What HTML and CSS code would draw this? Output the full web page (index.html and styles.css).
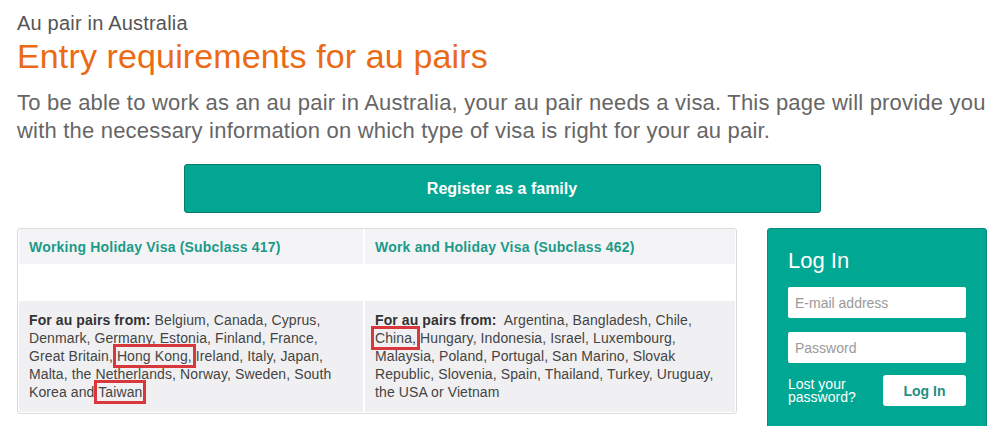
FILE: index.html
```html
<!DOCTYPE html>
<html lang="en">
<head>
    <meta charset="UTF-8">
    <meta name="viewport" content="width=device-width, initial-scale=1.0">
    <title>Entry requirements for au pairs</title>
    <link rel="stylesheet" href="styles.css">
</head>
<body>

    <div class="page">
        <div class="kicker">Au pair in Australia</div>
        <h1>Entry requirements for au pairs</h1>
        <p class="intro">To be able to work as an au pair in Australia, your au pair needs a visa. This page will provide you with the necessary information on which type of visa is right for your au pair.</p>

        <div class="cta">
            <a class="btn-register" href="#">Register as a family</a>
        </div>

        <div class="row">
            <div class="visas">
                <div class="visa-head">Working Holiday Visa (Subclass 417)</div>
                <div class="visa-head">Work and Holiday Visa (Subclass 462)</div>
                <div class="visa-gap"></div>
                <div class="visa-gap"></div>
                <div class="visa-body first">
                    <b>For au pairs from:</b> Belgium, Canada, Cyprus, Denmark, Germany, Estonia, Finland, France, Great Britain, <span class="mark">Hong Kong,</span> Ireland, Italy, Japan, Malta, the Netherlands, Norway, Sweden, South Korea and <span class="mark">Taiwan</span>
                </div>
                <div class="visa-body">
                    <b>For au pairs from:</b>&nbsp; Argentina, Bangladesh, Chile, <span class="mark">China,</span> Hungary, Indonesia, Israel, Luxembourg, Malaysia, Poland, Portugal, San Marino, Slovak Republic, Slovenia, Spain, Thailand, Turkey, Uruguay, the USA or Vietnam
                </div>
            </div>

            <div class="login">
                <h2>Log In</h2>
                <input type="text" placeholder="E-mail address">
                <input type="password" placeholder="Password">
                <div class="login-foot">
                    <a class="lost" href="#">Lost your<br>password?</a>
                    <button class="btn-login">Log In</button>
                </div>
            </div>
        </div>
    </div>

</body>
</html>
```

FILE: styles.css
```css
body {
    margin: 0;
    font-family: 'Liberation Sans', Arial, sans-serif;
    background-color: #ffffff;
    color: #444;
}
.page {
    padding: 11px 17px 0 17px;
}
.kicker {
    font-size: 20px;
    line-height: 24px;
    letter-spacing: 0.2px;
    color: #555;
}
h1 {
    margin: 1px 0 0 0;
    font-size: 34px;
    line-height: 40px;
    font-weight: normal;
    letter-spacing: 0.13px;
    color: #ea6a16;
}
.intro {
    margin: 13px -20px 0 0;
    font-size: 22px;
    line-height: 28px;
    letter-spacing: 0.2px;
    color: #666;
}
.cta {
    display: flex;
    justify-content: center;
    margin-top: 19px;
}
.btn-register {
    display: flex;
    align-items: center;
    justify-content: center;
    box-sizing: border-box;
    width: 637px;
    height: 49px;
    background-color: #03a692;
    border: 1px solid #0b7a6b;
    border-radius: 3px;
    color: #fff;
    font-weight: bold;
    font-size: 16px;
    text-decoration: none;
}
.row {
    display: flex;
    align-items: flex-start;
    gap: 30px;
    margin-top: 15px;
}
.visas {
    display: grid;
    grid-template-columns: 344px 1fr;
    grid-template-rows: 35px 37px auto;
    column-gap: 2px;
    box-sizing: border-box;
    width: 720px;
    padding: 0 1px 1px 1px;
    border: 1px solid #dcdcdc;
    border-radius: 3px;
    background-color: #fff;
}
.visa-head {
    padding: 9px 10px 0 10px;
    background-color: #f4f4f6;
    color: #1c9a89;
    font-weight: bold;
    font-size: 14px;
    line-height: 18px;
    letter-spacing: 0.2px;
}
.visa-body {
    padding: 10px 10px 11px 10px;
    background-color: #f0f0f2;
    font-size: 14px;
    line-height: 18px;
    letter-spacing: 0.1px;
    color: #444;
}
.visa-body.first {
    padding-right: 28px;
}
.visa-body b {
    color: #333;
}
.mark {
    outline: 3px solid #d8373c;
    outline-offset: 1px;
}
.login {
    box-sizing: border-box;
    width: 220px;
    height: 210px;
    padding: 19px 20px 0 20px;
    background-color: #00a793;
    border: 1px solid #0b8a7a;
    border-radius: 3px;
}
.login h2 {
    margin: 0 0 13px 0;
    font-size: 22px;
    line-height: 26px;
    font-weight: normal;
    color: #fff;
}
.login input {
    display: block;
    box-sizing: border-box;
    width: 178px;
    height: 31px;
    margin-bottom: 14px;
    padding: 0 7px;
    border: none;
    border-radius: 2px;
    font-family: 'Liberation Sans', Arial, sans-serif;
    font-size: 14px;
}
.login input::placeholder {
    color: #9a9a9a;
}
.login-foot {
    display: flex;
    align-items: center;
    justify-content: space-between;
    margin-top: -2px;
}
.lost {
    color: #fff;
    font-size: 14px;
    line-height: 13px;
    text-decoration: none;
}
.btn-login {
    width: 83px;
    height: 31px;
    background-color: #fff;
    border: none;
    border-radius: 3px;
    color: #1f8f82;
    font-family: 'Liberation Sans', Arial, sans-serif;
    font-weight: bold;
    font-size: 14px;
    cursor: pointer;
}
```
